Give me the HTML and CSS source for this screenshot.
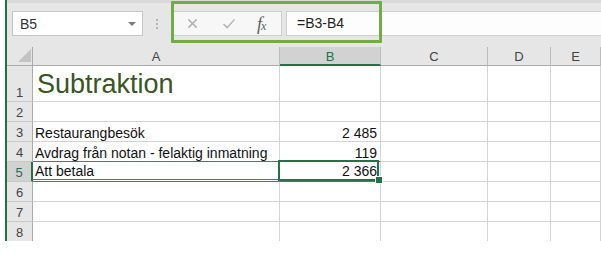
FILE: index.html
```html
<!DOCTYPE html>
<html lang="sv">
<head>
    <meta charset="UTF-8">
    <title>Subtraktion</title>
    <link rel="stylesheet" href="styles.css">
</head>
<body>
    <div class="sheet">
        <div class="toolbar">
            <div class="namebox">
                <span>B5</span>
                <span class="caret"></span>
            </div>
            <div class="grip"><i></i><i></i><i></i></div>
            <div class="fx-buttons">
                <svg class="icon" viewBox="0 0 12 12"><path d="M1.5 1.5l9 9M10.5 1.5l-9 9"/></svg>
                <svg class="icon" viewBox="0 0 14 12"><path d="M1 6.5l4 4L13 1.5"/></svg>
                <span class="fx"><i>f</i><sub><i>x</i></sub></span>
            </div>
            <div class="formula">=B3-B4</div>
            <div class="highlight"></div>
        </div>

        <div class="grid">
            <div class="hd corner"><span class="tri"></span></div>
            <div class="hd col">A</div>
            <div class="hd col active">B</div>
            <div class="hd col">C</div>
            <div class="hd col">D</div>
            <div class="hd col">E</div>

            <div class="hd row">1</div>
            <div class="cell title">Subtraktion</div>
            <div class="cell"></div><div class="cell"></div><div class="cell"></div><div class="cell"></div>

            <div class="hd row">2</div>
            <div class="cell"></div><div class="cell"></div><div class="cell"></div><div class="cell"></div><div class="cell"></div>

            <div class="hd row">3</div>
            <div class="cell">Restaurangbesök</div>
            <div class="cell num">2 485</div>
            <div class="cell"></div><div class="cell"></div><div class="cell"></div>

            <div class="hd row">4</div>
            <div class="cell above-total">Avdrag från notan - felaktig inmatning</div>
            <div class="cell num above-total">119</div>
            <div class="cell"></div><div class="cell"></div><div class="cell"></div>

            <div class="hd row active">5</div>
            <div class="cell total">Att betala</div>
            <div class="cell num total selected">2 366</div>
            <div class="cell"></div><div class="cell"></div><div class="cell"></div>

            <div class="hd row">6</div>
            <div class="cell"></div><div class="cell"></div><div class="cell"></div><div class="cell"></div><div class="cell"></div>

            <div class="hd row">7</div>
            <div class="cell"></div><div class="cell"></div><div class="cell"></div><div class="cell"></div><div class="cell"></div>

            <div class="hd row">8</div>
            <div class="cell"></div><div class="cell"></div><div class="cell"></div><div class="cell"></div><div class="cell"></div>
        </div>
    </div>
</body>
</html>
```

FILE: styles.css
```css
* {
    margin: 0;
    padding: 0;
    box-sizing: border-box;
}

body {
    background: #fff;
    font-family: 'Liberation Sans', Arial, sans-serif;
    width: 601px;
    height: 254px;
    overflow: hidden;
}

.sheet {
    margin-left: 5px;
    border-left: 2px solid #217346;
    height: 241px;
    overflow: hidden;
}

/* formula bar */
.toolbar {
    position: relative;
    height: 47px;
    background: #e6e6e6;
    box-shadow: inset 0 3px 0 #dadada;
    display: flex;
    align-items: flex-start;
    padding-top: 11px;
}

.namebox {
    margin-left: 5px;
    width: 131px;
    height: 25px;
    background: #fff;
    border: 1px solid #c6c6c6;
    display: flex;
    align-items: center;
    justify-content: space-between;
    padding: 0 6px 0 7px;
    font-size: 14px;
    color: #333;
}

.caret {
    width: 0;
    height: 0;
    border-left: 4px solid transparent;
    border-right: 4px solid transparent;
    border-top: 4px solid #7a7a7a;
}

.grip {
    width: 28px;
    height: 25px;
    display: flex;
    flex-direction: column;
    align-items: center;
    justify-content: center;
    gap: 2px;
}

.grip i {
    width: 2px;
    height: 2px;
    background: #b5b5b5;
}

.fx-buttons {
    margin-left: 3px;
    width: 108px;
    height: 25px;
    background: #f7f7f7;
    border-top: 1px solid #cfcfcf;
    border-bottom: 1px solid #cfcfcf;
    border-right: 1px solid #cfcfcf;
    display: flex;
    align-items: center;
    padding-left: 13px;
}

.icon {
    fill: none;
    stroke: #b3b3b3;
    stroke-width: 1.6;
}

.icon:first-child {
    width: 11px;
    height: 11px;
}

.icon:nth-child(2) {
    width: 14px;
    height: 11px;
    margin-left: 24px;
}

.fx {
    margin-left: 21px;
    font-family: 'Liberation Serif', serif;
    font-size: 18px;
    line-height: 1;
    color: #606060;
}

.fx sub {
    font-size: 12px;
    vertical-align: 0;
    margin-left: -1px;
}

.formula {
    margin-left: 4px;
    flex: 1;
    height: 25px;
    background: #fdfdfd;
    border: 1px solid #cfcfcf;
    border-right: none;
    font-size: 14px;
    color: #222;
    padding: 3px 0 0 10px;
}

.highlight {
    position: absolute;
    left: 164px;
    top: 1px;
    width: 211px;
    height: 42px;
    border: 3px solid #70ad47;
    border-radius: 1px;
}

/* grid */
.grid {
    display: grid;
    grid-template-columns: 26px 247px 101px 107px 63px 1fr;
    grid-template-rows: 19px 36px repeat(7, 20px);
}

.cell {
    border-right: 1px solid #d4d4d4;
    border-bottom: 1px solid #d4d4d4;
    display: flex;
    align-items: flex-end;
    padding: 0 2px;
    font-size: 14px;
    color: #111;
    white-space: nowrap;
}

.hd {
    background: #e6e6e6;
    color: #444;
    font-size: 13px;
    display: flex;
    align-items: center;
    justify-content: center;
    border-right: 1px solid #ababab;
    border-bottom: 1px solid #ababab;
}

.hd.col {
    border-right-color: #bcbcbc;
    padding-top: 1px;
}

.hd.row {
    align-items: flex-end;
    padding-bottom: 1px;
    border-bottom-color: #c8c8c8;
}

.hd.active {
    background: #d2d2d2;
    color: #217346;
}

.hd.col.active {
    border-bottom: 2px solid #217346;
}

.hd.row.active {
    border-right: 2px solid #217346;
}

.corner {
    position: relative;
}

.tri {
    position: absolute;
    right: 1px;
    bottom: 3px;
    width: 0;
    height: 0;
    border-left: 13px solid transparent;
    border-bottom: 13px solid #c3c3c3;
}

.title {
    font-size: 27px;
    color: #375623;
    padding-left: 4px;
    padding-bottom: 1px;
}

.num {
    justify-content: flex-end;
    padding-right: 3px;
}

.above-total {
    border-bottom-color: #548235;
}

.total {
    border-bottom: 3px double #548235;
}

.selected {
    position: relative;
}

.selected::after {
    content: "";
    position: absolute;
    left: -2px;
    top: -2px;
    right: 1px;
    bottom: -2px;
    border: 2px solid #217346;
}

.selected::before {
    content: "";
    position: absolute;
    right: -3px;
    bottom: -5px;
    width: 6px;
    height: 6px;
    background: #217346;
    border: 1px solid #fff;
    z-index: 1;
}
```
